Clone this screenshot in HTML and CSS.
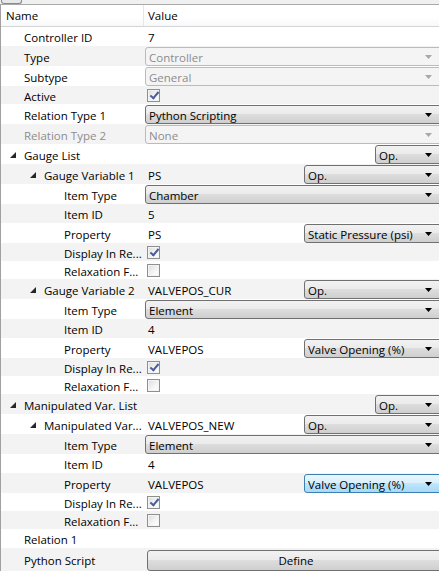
FILE: index.html
```html
<!DOCTYPE html>
<html>
<head>
<meta charset="utf-8">
<link rel="stylesheet" href="styles.css">
</head>
<body>
<div class="topbar"><div class="tbtn"></div></div>
<div class="grid">
  <div class="header">
    <div class="hname">Name</div>
    <div class="hvalue">Value</div>
  </div>

  <div class="row t odd"><div class="name l0">Controller ID</div><div class="value"><span class="txt">7</span></div></div>
  <div class="row c even"><div class="name l0">Type</div><div class="value"><div class="combo dis full"><span>Controller</span><i class="arr"></i></div></div></div>
  <div class="row c odd"><div class="name l0">Subtype</div><div class="value"><div class="combo dis full"><span>General</span><i class="arr"></i></div></div></div>
  <div class="row k even"><div class="name l0">Active</div><div class="value"><span class="chk on"></span></div></div>
  <div class="row c odd"><div class="name l0">Relation Type 1</div><div class="value"><div class="combo full"><span>Python Scripting</span><i class="arr"></i></div></div></div>
  <div class="row c even"><div class="name l0 gray">Relation Type 2</div><div class="value"><div class="combo dis full"><span>None</span><i class="arr"></i></div></div></div>

  <div class="row c odd"><div class="name l0"><i class="exp"></i>Gauge List</div><div class="value"><span class="txt"></span><div class="combo op"><span>Op.</span><i class="arr"></i></div></div></div>
  <div class="row c even"><div class="name l1"><i class="exp"></i>Gauge Variable 1</div><div class="value"><span class="txt">PS</span><div class="combo half"><span>Op.</span><i class="arr"></i></div></div></div>
  <div class="row c odd"><div class="name l2">Item Type</div><div class="value"><div class="combo full"><span>Chamber</span><i class="arr"></i></div></div></div>
  <div class="row t even"><div class="name l2">Item ID</div><div class="value"><span class="txt">5</span></div></div>
  <div class="row c odd"><div class="name l2">Property</div><div class="value"><span class="txt">PS</span><div class="combo half"><span>Static Pressure (psi)</span><i class="arr"></i></div></div></div>
  <div class="row k even"><div class="name l2">Display In Re...</div><div class="value"><span class="chk on"></span></div></div>
  <div class="row k odd"><div class="name l2">Relaxation F...</div><div class="value"><span class="chk"></span></div></div>

  <div class="row c even"><div class="name l1"><i class="exp"></i>Gauge Variable 2</div><div class="value"><span class="txt">VALVEPOS_CUR</span><div class="combo half"><span>Op.</span><i class="arr"></i></div></div></div>
  <div class="row c odd"><div class="name l2">Item Type</div><div class="value"><div class="combo full"><span>Element</span><i class="arr"></i></div></div></div>
  <div class="row t even"><div class="name l2">Item ID</div><div class="value"><span class="txt">4</span></div></div>
  <div class="row c odd"><div class="name l2">Property</div><div class="value"><span class="txt">VALVEPOS</span><div class="combo half"><span>Valve Opening (%)</span><i class="arr"></i></div></div></div>
  <div class="row k even"><div class="name l2">Display In Re...</div><div class="value"><span class="chk on"></span></div></div>
  <div class="row k odd"><div class="name l2">Relaxation F...</div><div class="value"><span class="chk"></span></div></div>

  <div class="row c even"><div class="name l0"><i class="exp"></i>Manipulated Var. List</div><div class="value"><span class="txt"></span><div class="combo op"><span>Op.</span><i class="arr"></i></div></div></div>
  <div class="row c odd"><div class="name l1"><i class="exp"></i>Manipulated Var...</div><div class="value"><span class="txt">VALVEPOS_NEW</span><div class="combo half"><span>Op.</span><i class="arr"></i></div></div></div>
  <div class="row c even"><div class="name l2">Item Type</div><div class="value"><div class="combo full"><span>Element</span><i class="arr"></i></div></div></div>
  <div class="row t odd"><div class="name l2">Item ID</div><div class="value"><span class="txt">4</span></div></div>
  <div class="row c even"><div class="name l2">Property</div><div class="value"><span class="txt">VALVEPOS</span><div class="combo half hot"><span>Valve Opening (%)</span><i class="arr"></i></div></div></div>
  <div class="row k odd"><div class="name l2">Display In Re...</div><div class="value"><span class="chk on"></span></div></div>
  <div class="row k even"><div class="name l2">Relaxation F...</div><div class="value"><span class="chk"></span></div></div>

  <div class="row t odd"><div class="name l0">Relation 1</div><div class="value"></div></div>
  <div class="row b even"><div class="name l0">Python Script</div><div class="value"><div class="btn">Define</div></div></div>
</div>
</body>
</html>
```

FILE: styles.css
```css
html, body {
  margin: 0;
  padding: 0;
  overflow: hidden;
  background: #ffffff;
}
body {
  width: 439px;
  height: 571px;
  font-family: "Open Sans", "Noto Sans", sans-serif;
  font-size: 11.5px;
  color: #000;
}
.topbar {
  height: 5px;
  background: #f0f0f0;
  border-bottom: 1px solid #a9a9a9;
  box-sizing: border-box;
}
.tbtn {
  width: 21px;
  height: 4px;
  border: 1px solid #8a8a8a;
  border-top: none;
  border-radius: 0 0 3px 3px;
  background: #e8e8e8;
  margin-left: 1px;
  box-sizing: border-box;
}
.grid {
  width: 441px;
  border-left: 1px solid #a0a0a0;
  box-sizing: border-box;
}
.header {
  display: flex;
  height: 22px;
  border-bottom: 1px solid #d5d5d5;
  background: linear-gradient(#ffffff, #ffffff 60%, #f7f8fa);
  box-sizing: border-box;
}
.hname {
  width: 143px;
  padding-left: 5px;
  padding-top: 1px;
  line-height: 20px;
  border-right: 1px solid #e3e6ea;
  box-sizing: border-box;
}
.hvalue {
  padding-left: 4px;
  padding-top: 1px;
  line-height: 20px;
}
.row {
  display: flex;
  box-sizing: border-box;
}
.row.odd { background: #ffffff; }
.row.even { background: #f3f3f3; }
.row.t { height: 19px; }
.row.c { height: 20px; }
.row.k { height: 18px; }
.row.b { height: 23px; }
.name {
  width: 144px;
  flex: none;
  display: flex;
  align-items: center;
  white-space: nowrap;
  overflow: hidden;
  box-sizing: border-box;
  padding-top: 2px;
}
.name.gray { color: #8d8d8d; }
.l0 { padding-left: 23px; }
.l1 { padding-left: 43px; }
.l2 { padding-left: 63px; }
.exp {
  width: 6px;
  height: 6px;
  margin-left: -14px;
  margin-right: 8px;
  background: #262626;
  clip-path: polygon(100% 0, 100% 100%, 0 100%);
  flex: none;
}
.value {
  flex: 1;
  display: flex;
  align-items: center;
  min-width: 0;
}
.txt {
  flex: 1;
  padding-left: 3px;
  padding-top: 2px;
  white-space: nowrap;
}
.combo {
  height: 19px;
  display: flex;
  align-items: center;
  justify-content: space-between;
  border: 1px solid #707070;
  border-radius: 3px;
  background: linear-gradient(#f2f2f2 0%, #ebebeb 45%, #dddddd 50%, #cfcfcf 100%);
  box-sizing: border-box;
  padding: 1px 8px 0 3px;
  white-space: nowrap;
  margin-top: 1px;
}
.combo.full { flex: 1; margin-right: -4px; padding-right: 12px; }
.combo.half { width: 139px; flex: none; margin-right: -2px; padding-right: 10px; }
.combo.op { width: 68px; flex: none; margin-right: -2px; padding-right: 10px; }
.combo.dis {
  border-color: #b8bcc0;
  background: #f4f4f4;
  color: #8d8d8d;
}
.combo.hot {
  border-color: #3c7fb1;
  background: linear-gradient(#eaf6fd 0%, #d9f0fc 45%, #bee6fd 50%, #a7d9f5 100%);
}
.arr {
  width: 7px;
  height: 4px;
  background: #000;
  clip-path: polygon(0 0, 100% 0, 50% 100%);
  flex: none;
}
.combo.dis .arr { background: #a8a8a8; }
.chk {
  width: 13px;
  height: 13px;
  margin-left: 2px;
  margin-top: 1px;
  border: 1px solid #8e8f8f;
  box-sizing: border-box;
  background: linear-gradient(135deg, #dcdcdc, #f6f6f6 60%, #ffffff);
  box-shadow: inset 0 0 0 1px #f4f4f4;
  position: relative;
}
.chk.on::after {
  content: "";
  position: absolute;
  left: 4px;
  top: 0px;
  width: 3px;
  height: 7px;
  border: solid #4a5e9a;
  border-width: 0 2px 2px 0;
  transform: rotate(40deg);
}
.btn {
  flex: 1;
  height: 21px;
  margin-left: 2px;
  margin-right: -4px;
  margin-top: 1px;
  border: 1px solid #707070;
  border-radius: 3px;
  background: linear-gradient(#f2f2f2 0%, #ebebeb 45%, #dddddd 50%, #cfcfcf 100%);
  box-sizing: border-box;
  text-align: center;
  line-height: 19px;
}
```
